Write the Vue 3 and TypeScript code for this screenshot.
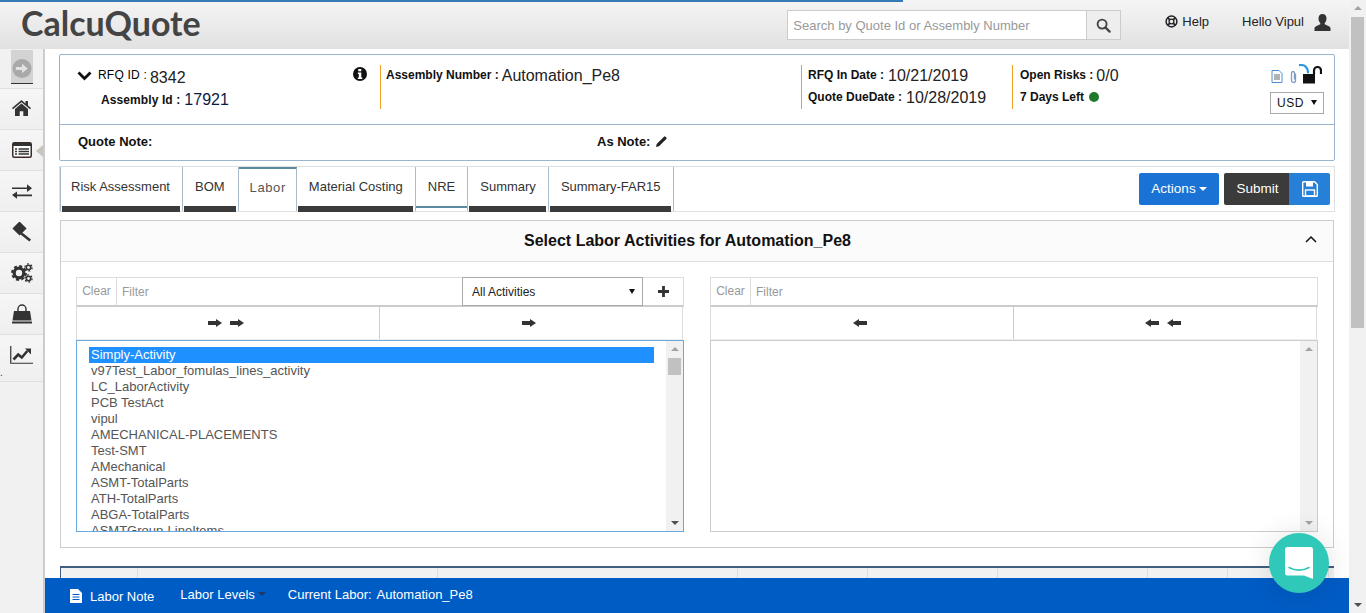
<template>
  <div class="page">
    <div class="window">
      <header class="topbar">
        <div class="progress"></div>
        <div class="logo">CalcuQuote</div>
        <div class="search">
          <input type="text" placeholder="Search by Quote Id or Assembly Number" />
          <span class="search-btn">
            <svg width="15" height="15" viewBox="0 0 16 16"><circle cx="6.500" cy="6.500" r="4.800" fill="none" stroke="#444" stroke-width="2" /><path d="M10 10l4.500 4.500" stroke="#444" stroke-width="2.400" stroke-linecap="round" /></svg>
          </span>
        </div>
        <div class="help">
          <svg width="13" height="13" viewBox="0 0 14 14"><circle cx="7" cy="7" r="5.800" fill="none" stroke="#222" stroke-width="1.600" /><circle cx="7" cy="7" r="2.600" fill="none" stroke="#222" stroke-width="1.400" /><path d="M3 3l2 2M11 3L9 5M3 11l2-2M11 11L9 9" stroke="#222" stroke-width="1.800" /></svg>
          Help
        </div>
        <div class="hello">Hello Vipul</div>
        <svg class="user" width="17" height="17" viewBox="0 0 16 17"><path d="M8 0c2.600 0 4 2 4 4.400 0 2-.9 3.600-1.800 4.500v1.400l4.200 2c1 .5 1.600 1.200 1.600 2.200V17H0v-2.500c0-1 .6-1.700 1.600-2.200l4.200-2V8.900C4.900 8 4 6.400 4 4.400 4 2 5.400 0 8 0z" fill="#333" /></svg>
      </header>

      <div class="body">
        <aside class="sidebar">
          <div class="side-toggle">
            <svg width="22" height="22" viewBox="0 0 22 22"><circle cx="11" cy="11" r="10" fill="#a9a9a9" /><path d="M4.500 9.500h6.500V6l6 5-6 5v-3.500H4.500z" fill="#e2e2e2" /></svg>
          </div>
          <div class="side-item home">
            <svg width="19" height="16" viewBox="0 0 19 16"><path d="M9.500 0L0 8l1 1.200L9.500 2.200 18 9.200 19 8l-3-2.500V1h-2.500v2.400z" fill="#333" /><path d="M9.500 3.600L3 9v7h4.700v-4.800h3.600V16H16V9z" fill="#333" /></svg>
          </div>
          <div class="side-item active-item">
            <svg width="20" height="16" viewBox="0 0 20 16"><rect x=".75" y=".75" width="18.500" height="14.500" rx="1.500" fill="#fff" stroke="#3a2a28" stroke-width="1.500" /><rect x="1" y="1" width="18" height="3" fill="#333" /><path d="M3 7h2M3 9.500h2M3 12h2M6.500 7H17M6.500 9.500H17M6.500 12H17" stroke="#333" stroke-width="1.400" /></svg>
            <span class="caret-left"></span>
          </div>
          <div class="side-item">
            <svg width="20" height="15" viewBox="0 0 20 15"><path d="M0 3.400h15V.3L20 4.200l-5 3.900V5H0z" fill="#333" /><path d="M20 10.600H5V7.500L0 11l5 3.700v-2.500h15z" fill="#333" /></svg>
          </div>
          <div class="side-item">
            <svg width="20" height="20" viewBox="0 0 20 20"><rect x="2.500" y="1.500" width="10" height="10" transform="rotate(45 7.500 6.500)" fill="#333" /><path d="M9.500 10l9.500 7.500-1.600 2L8 12z" fill="#333" /></svg>
          </div>
          <div class="side-item">
            <svg width="22" height="20" viewBox="0 0 22 20"><circle cx="8" cy="10" r="4.800" fill="none" stroke="#333" stroke-width="3.200" /><circle cx="8" cy="10" r="6.900" fill="none" stroke="#333" stroke-width="2" stroke-dasharray="3 2.420" /><circle cx="17.500" cy="4.500" r="2.200" fill="none" stroke="#333" stroke-width="1.600" /><circle cx="17.500" cy="4.500" r="3.600" fill="none" stroke="#333" stroke-width="1.300" stroke-dasharray="1.800 1.970" /><circle cx="17.500" cy="15.500" r="2.200" fill="none" stroke="#333" stroke-width="1.600" /><circle cx="17.500" cy="15.500" r="3.600" fill="none" stroke="#333" stroke-width="1.300" stroke-dasharray="1.800 1.970" /></svg>
          </div>
          <div class="side-item">
            <svg width="20" height="20" viewBox="0 0 20 20"><path d="M6 7V5a4 4 0 0 1 8 0v2" fill="none" stroke="#333" stroke-width="1.400" /><path d="M2 7h16l1.500 9.500H.5z" fill="#333" /><rect x="0" y="17.500" width="20" height="2" fill="#333" /></svg>
          </div>
          <div class="side-item last">
            <svg width="23" height="18" viewBox="0 0 23 18"><path d="M.75 0v17.250H23" fill="none" stroke="#333" stroke-width="1.200" /><path d="M3.500 13.500l4.700-5 3.600 3 5.500-6.500" fill="none" stroke="#333" stroke-width="2.600" /><path d="M15 2.500h6v6z" fill="#333" /></svg>
            <span class="side-dot">.</span>
          </div>
        </aside>

        <main class="main">
          <section class="info-card">
            <div class="info-top">
              <div class="info-ids">
                <div class="id-line first">
                  <svg class="chevron" width="15" height="10" viewBox="0 0 15 10"><path d="M1.500 1.500l6 6 6-6" fill="none" stroke="#111" stroke-width="2.800" /></svg>
                  <b class="thin">RFQ ID :</b><span class="val">8342</span>
                </div>
                <div class="id-line second"><b>Assembly Id :</b><span class="val navy">17921</span></div>
                <svg class="info-icon" width="14" height="14" viewBox="0 0 14 14"><circle cx="7" cy="7" r="7" fill="#111" /><rect x="5.300" y="2" width="3" height="2.300" fill="#fff" /><path d="M4.800 5.500h3.500v5h1v1.500H4.800v-1.500h1V7h-1z" fill="#fff" /></svg>
              </div>
              <div class="info-col assembly">
                <div class="row"><b>Assembly Number :</b><span class="val">Automation_Pe8</span></div>
              </div>
              <div class="info-col dates">
                <div class="row"><b>RFQ In Date :</b><span class="val">10/21/2019</span></div>
                <div class="row"><b>Quote DueDate :</b><span class="val">10/28/2019</span></div>
              </div>
              <div class="info-col risks">
                <div class="row"><b>Open Risks :</b><span class="val">0/0</span></div>
                <div class="row"><b>7 Days Left</b><i class="dot"></i></div>
              </div>
              <div class="info-tools">
                <div class="tool-icons">
                  <svg class="doc" width="12" height="13" viewBox="0 0 12 13"><path d="M1 .5h7l3 3v9H1z" fill="#fff" stroke="#4a90d0" /><path d="M3 5h6M3 7h6M3 9h6" stroke="#666" /></svg>
                  <svg class="clip" width="9" height="14" viewBox="0 0 9 14"><path d="M6.500 3.500v7a2 2 0 0 1-4 0V3a1.500 1.500 0 0 1 3 0v6.500" fill="none" stroke="#7f9cc0" stroke-width="1.300" /></svg>
                  <svg class="lock" width="24" height="20" viewBox="0 0 24 20"><path d="M1 1.200c5-.9 9 1.300 9 8" fill="none" stroke="#2f9ae0" stroke-width="2.200" /><path d="M16 10V6.500a3.500 3.500 0 0 1 7 0V10" fill="none" stroke="#111" stroke-width="2.200" /><rect x="5" y="10" width="12" height="9.500" fill="#111" /></svg>
                </div>
                <div class="currency">USD<span class="tri"></span></div>
              </div>
            </div>
            <div class="info-notes">
              <b class="quote-note">Quote Note:</b>
              <b class="as-note">As Note:</b>
              <svg width="11" height="11" viewBox="0 0 11 11"><path d="M0 11l.7-3L8 .7a1 1 0 0 1 1.400 0l.9.9a1 1 0 0 1 0 1.400L3 10.300z" fill="#222" /></svg>
            </div>
          </section>

          <nav class="tabs">
            <a v-for="tab in tabs" :key="tab.name" class="tab" :class="tab.state">{{ tab.name }}</a>
            <div class="tab-actions">
              <button class="btn-actions">Actions<span class="caret"></span></button>
              <div class="submit-group">
                <button class="btn-submit">Submit</button>
                <button class="btn-save">
                  <svg width="16" height="16" viewBox="0 0 16 16"><path d="M1.500.7h11l2.800 2.800v11a.8.8 0 0 1-.8.8h-13a.8.8 0 0 1-.8-.8v-13a.8.8 0 0 1 .8-.8z" fill="none" stroke="#fff" stroke-width="1.400" /><rect x="4" y="1" width="7" height="4.500" fill="#fff" /><rect x="3.500" y="9" width="9" height="6" fill="none" stroke="#fff" stroke-width="1.400" /></svg>
                </button>
              </div>
            </div>
          </nav>

          <section class="panel">
            <div class="panel-head">
              <h3>Select Labor Activities for Automation_Pe8</h3>
              <svg class="collapse" width="12" height="8" viewBox="0 0 12 8"><path d="M1 7l5-5 5 5" fill="none" stroke="#111" stroke-width="1.500" /></svg>
            </div>
            <div class="dual">
              <div class="side">
                <div class="filter-row">
                  <span class="clear">Clear</span>
                  <input class="filter" placeholder="Filter" />
                  <div class="activity-select">All Activities<span class="tri"></span></div>
                  <span class="plus">
                    <svg width="11" height="11" viewBox="0 0 11 11"><path d="M5.500 0v11M0 5.500h11" stroke="#333" stroke-width="2.800" /></svg>
                  </span>
                </div>
                <div class="move-row">
                  <button><span v-for="n in 2" :key="n" class="arrow right"></span></button>
                  <button><span class="arrow right"></span></button>
                </div>
                <div class="listbox focused">
                  <ul>
                    <li v-for="(item, i) in activities" :key="item" :class="{ selected: i === 0 }">{{ item }}</li>
                  </ul>
                  <div class="list-scroll">
                    <span class="sc-up"></span>
                    <span class="sc-thumb"></span>
                    <span class="sc-down"></span>
                  </div>
                </div>
              </div>
              <div class="side">
                <div class="filter-row">
                  <span class="clear">Clear</span>
                  <input class="filter" placeholder="Filter" />
                </div>
                <div class="move-row">
                  <button><span class="arrow left"></span></button>
                  <button><span v-for="n in 2" :key="n" class="arrow left"></span></button>
                </div>
                <div class="listbox">
                  <ul></ul>
                  <div class="list-scroll">
                    <span class="sc-up"></span>
                    <span class="sc-down"></span>
                  </div>
                </div>
              </div>
            </div>
          </section>

          <div class="grid-head">
            <span v-for="(w, i) in gridCols" :key="i" class="grid-col" :style="{ width: w + 'px' }"></span>
          </div>

          <footer class="bottom-bar">
            <svg width="12" height="14" viewBox="0 0 12 14"><path d="M0 0h8l4 4v10H0z" fill="#fff" /><path d="M2.500 5.500h7M2.500 8h7M2.500 10.500h7" stroke="#005cc5" /></svg>
            <span class="note">Labor Note</span>
            <span class="levels">Labor Levels<i class="dark-caret"></i></span>
            <span class="current-label">Current Labor:</span>
            <span class="current-name">Automation_Pe8</span>
          </footer>
        </main>
      </div>
    </div>

    <div class="page-scroll">
      <span class="ps-up"></span>
      <span class="ps-thumb"></span>
      <span class="ps-down"></span>
    </div>

    <div class="chat">
      <svg width="28" height="32" viewBox="0 0 28 32"><path d="M2.500 0h23A2.500 2.500 0 0 1 28 2.500V32l-9-3.500H2.500A2.500 2.500 0 0 1 0 26V2.500A2.500 2.500 0 0 1 2.500 0z" fill="#fff" /><path d="M4 20.500c6 3.500 14 3.500 20 0" fill="none" stroke="#30c8b8" stroke-width="1.600" stroke-linecap="round" /></svg>
    </div>
  </div>
</template>

<script setup lang="ts">
interface Tab {
  name: string;
  state: string;
}

const tabs: Tab[] = [
  { name: 'Risk Assessment', state: 'done' },
  { name: 'BOM', state: 'done' },
  { name: 'Labor', state: 'active' },
  { name: 'Material Costing', state: 'done' },
  { name: 'NRE', state: 'partial' },
  { name: 'Summary', state: 'done' },
  { name: 'Summary-FAR15', state: 'done' },
];

const activities: string[] = [
  'Simply-Activity',
  'v97Test_Labor_fomulas_lines_activity',
  'LC_LaborActivity',
  'PCB TestAct',
  'vipul',
  'AMECHANICAL-PLACEMENTS',
  'Test-SMT',
  'AMechanical',
  'ASMT-TotalParts',
  'ATH-TotalParts',
  'ABGA-TotalParts',
  'ASMTGroup-LineItems',
];

const gridCols: number[] = [77, 300, 300, 130, 130, 150, 80, 101];
</script>

<style>
html,
body {
  margin: 0;
  overflow: hidden;
}
</style>

<style scoped>
.page {
  display: flex;
  width: 1366px;
  height: 613px;
  overflow: hidden;
  position: relative;
  font-family: "Liberation Sans", Arial, sans-serif;
  color: #333;
  background: #fff;
}

.window {
  flex: 1;
  min-width: 0;
  display: flex;
  flex-direction: column;
}

.topbar {
  position: relative;
  height: 49px;
  flex: none;
  display: flex;
  align-items: center;
  background: linear-gradient(#f5f5f5, #e1e1e1);
}

.progress {
  position: absolute;
  left: 0;
  top: 0;
  width: 903px;
  height: 2px;
  background: #337ab7;
}

.logo {
  margin-left: 21px;
  margin-top: -4px;
  font-family: Lato, sans-serif;
  font-weight: 700;
  font-size: 34px;
  color: #444;
}

.search {
  margin-left: auto;
  display: flex;
  width: 334px;
  height: 30px;
  box-sizing: border-box;
  border: 1px solid #ccc;
  background: #fff;
  margin-top: 1px;
}

.search input {
  flex: 1;
  min-width: 0;
  border: 0;
  outline: 0;
  padding: 0 5px;
  font: 13px "Liberation Sans", Arial, sans-serif;
}

.search input::placeholder,
.filter::placeholder {
  color: #999;
  opacity: 1;
}

.search-btn {
  width: 33px;
  display: flex;
  align-items: center;
  justify-content: center;
  background: #eee;
  border-left: 1px solid #ccc;
}

.help {
  margin-left: 44px;
  display: flex;
  align-items: center;
  gap: 4px;
  font-size: 13px;
  color: #222;
  margin-top: -6px;
}

.hello {
  margin-left: 33px;
  font-size: 13px;
  color: #222;
  margin-top: -6px;
}

.user {
  margin-left: 10px;
  margin-right: 18px;
  margin-top: -5px;
}

.body {
  flex: 1;
  display: flex;
  min-height: 0;
}

.sidebar {
  width: 43px;
  flex: none;
  background: #f1f1f1;
  border-right: 2px solid #ccc;
}

.side-toggle {
  height: 39px;
  display: flex;
  justify-content: center;
}

.side-toggle svg {
  box-sizing: content-box;
  padding: 8px 0 4px;
  background: #d3d3d3;
  border-bottom: 1px solid #333;
  height: 21px;
  align-self: flex-start;
  margin-top: 1px;
  width: 22px;
}

.side-item {
  position: relative;
  height: 40px;
  border-top: 1px solid #e0e0e0;
  display: flex;
  align-items: center;
  justify-content: center;
  background: linear-gradient(#f6f6f6, #efefef);
}

.side-item.home svg {
  margin-top: -2px;
}

.side-item.last {
  border-bottom: 1px solid #e0e0e0;
  align-items: flex-start;
  padding-top: 11px;
  height: 35px;
}

.caret-left {
  position: absolute;
  right: 0;
  top: 15px;
  border: 6px solid transparent;
  border-left: 0;
  border-right: 7px solid #c9c4bd;
}

.side-dot {
  position: absolute;
  left: 0;
  bottom: 3px;
  font-size: 10px;
}

.main {
  flex: 1;
  min-width: 0;
  position: relative;
  padding: 5px 14px 0;
  box-sizing: border-box;
  background: #fff;
}

b {
  font-size: 12px;
  line-height: 14px;
  color: #111;
  margin-top: 2px;
  white-space: nowrap;
}

.val {
  font-size: 16px;
  line-height: 18px;
  color: #222;
  margin-left: 3px;
  margin-top: 1px;
  white-space: nowrap;
}

.val.navy {
  color: #0a1a4a;
}

.info-card {
  border: 1px solid #9db5cc;
  border-radius: 2px;
  height: 107px;
  box-sizing: border-box;
}

.info-top {
  height: 69px;
  display: flex;
  border-bottom: 1px solid #9db5cc;
}

.info-ids {
  position: relative;
  width: 320px;
  flex: none;
  padding: 12px 0 0 17px;
  box-sizing: border-box;
}

.id-line {
  display: flex;
  align-items: flex-start;
}

.id-line.first {
  height: 24px;
}

.id-line.first b {
  margin-top: 1px;
}

.id-line.first .val {
  margin-top: 2px;
  margin-left: 3px;
}

.id-line.second {
  padding-left: 24px;
  height: 22px;
}

.id-line.second b {
  margin-top: 2px;
  letter-spacing: 0.1px;
}

.id-line.second .val {
  margin-top: 0;
  margin-left: 4px;
}

.thin {
  font-weight: 400;
  letter-spacing: 0.2px;
  color: #000;
}

.chevron {
  margin-right: 6px;
  margin-top: 4px;
}

.info-icon {
  position: absolute;
  right: 13px;
  top: 12px;
}

.info-col {
  margin-top: 10px;
  height: 44px;
  box-sizing: border-box;
  border-left: 1px solid #f0a020;
  padding: 1px 0 0 5px;
  flex: none;
}

.assembly {
  width: 421px;
}

.dates {
  width: 211px;
  padding-left: 6px;
}

.dates .val {
  margin-left: 4px;
}

.risks {
  width: 220px;
  padding-left: 7px;
}

.row {
  height: 22px;
  display: flex;
  align-items: flex-start;
}

.dot {
  width: 10px;
  height: 10px;
  border-radius: 50%;
  background: #1e7b2b;
  margin-left: 5px;
  margin-top: 4px;
}

.info-tools {
  flex: 1;
  display: flex;
  flex-direction: column;
  align-items: flex-end;
  padding-right: 10px;
}

.tool-icons {
  display: flex;
  align-items: flex-end;
  height: 29px;
  box-sizing: border-box;
  padding: 8px 2px 0 0;
  margin-bottom: 8px;
}

.doc {
  margin-right: 6px;
  margin-bottom: 1px;
}

.currency {
  position: relative;
  width: 54px;
  height: 22px;
  box-sizing: border-box;
  border: 1px solid #aaa;
  background: #fff;
  font-size: 12px;
  letter-spacing: 0.5px;
  line-height: 20px;
  padding-left: 6px;
  color: #111;
}

.tri {
  position: absolute;
  right: 6px;
  top: 7px;
  border: 3px solid transparent;
  border-top: 5px solid #111;
  border-bottom: 0;
}

.info-notes {
  height: 36px;
  display: flex;
  align-items: center;
  padding: 0 0 3px 18px;
  box-sizing: border-box;
}

.info-notes b {
  font-size: 13px;
  margin-top: 0;
}

.quote-note {
  width: 491px;
}

.as-note {
  width: 59px;
  margin-left: 28px;
}

.tabs {
  margin-top: 5px;
  height: 46px;
  box-sizing: border-box;
  border: 1px solid #e0e0e0;
  display: flex;
  align-items: stretch;
}

.tab {
  position: relative;
  font-size: 13px;
  line-height: 39px;
  padding: 0 12px;
  color: #333;
  border-right: 1px solid #a9bccb;
  white-space: nowrap;
}

.tab:first-child {
  border-left: 1px solid #a9bccb;
  padding-left: 10px;
}

.tab:nth-child(2) {
  padding-right: 13px;
}

.tab.done::after {
  content: "";
  position: absolute;
  left: 1px;
  right: 2px;
  bottom: -1px;
  height: 6px;
  background: #3b3b3b;
}

.tab.active {
  border-top: 2px solid #5b8ba0;
  color: #555;
  line-height: 37px;
  letter-spacing: 0.6px;
  padding: 0 10px 0 11px;
}

.tab.partial::after {
  content: "";
  position: absolute;
  left: 0;
  right: 0;
  bottom: 3px;
  height: 2px;
  background: #5b8ba0;
}

.tab-actions {
  margin-left: auto;
  display: flex;
  gap: 5px;
  padding: 6px 4px 0 0;
}

button {
  font-family: inherit;
  cursor: pointer;
}

.btn-actions {
  width: 80px;
  height: 32px;
  border: 0;
  border-radius: 2px;
  background: #1b72d5;
  color: #fff;
  font-size: 13.500px;
  padding: 0 0 2px;
}

.caret {
  display: inline-block;
  margin-left: 3px;
  vertical-align: middle;
  border: 4px solid transparent;
  border-top: 4px solid #fff;
  border-bottom: 0;
}

.submit-group {
  display: flex;
  height: 32px;
  border-radius: 2px;
  overflow: hidden;
}

.btn-submit {
  width: 65px;
  border: 0;
  background: #3b3b3b;
  color: #fff;
  font-size: 13.500px;
  padding: 0 0 2px 2px;
}

.btn-save {
  width: 41px;
  border: 0;
  background: #2680d8;
  padding: 0;
  display: flex;
  align-items: center;
  justify-content: center;
}

.panel {
  margin-top: 8px;
  margin-left: 1px;
  margin-right: 1px;
  height: 328px;
  box-sizing: border-box;
  border: 1px solid #ccc;
}

.panel-head {
  position: relative;
  height: 41px;
  box-sizing: border-box;
  border-bottom: 1px solid #ddd;
  background: #fbfbfb;
  display: flex;
  align-items: center;
  justify-content: center;
  padding-right: 19px;
}

h3 {
  margin: 0;
  font-size: 16px;
  color: #111;
}

.collapse {
  position: absolute;
  right: 16px;
  top: 14px;
}

.dual {
  display: flex;
  gap: 26px;
  padding: 15px 15px 0;
}

.side {
  width: 608px;
}

.filter-row {
  display: flex;
  height: 30px;
  box-sizing: border-box;
  border: 1px solid #ddd;
  border-bottom: 2px solid #ccc;
}

.clear {
  width: 40px;
  flex: none;
  box-sizing: border-box;
  border-right: 1px solid #ddd;
  font-size: 12px;
  line-height: 27px;
  text-align: center;
  color: #999;
}

.filter {
  flex: 1;
  min-width: 0;
  border: 0;
  outline: 0;
  padding: 0 5px;
  font: 12px "Liberation Sans", Arial, sans-serif;
}

.activity-select {
  position: relative;
  width: 181px;
  flex: none;
  box-sizing: border-box;
  height: 29px;
  margin: -1px 0 0;
  border: 1px solid #aaa;
  font-size: 12px;
  line-height: 28px;
  padding-left: 9px;
  color: #222;
}

.activity-select .tri {
  top: 11px;
  right: 7px;
}

.plus {
  width: 40px;
  flex: none;
  display: flex;
  align-items: center;
  justify-content: center;
}

.move-row {
  display: flex;
  height: 33px;
  box-sizing: border-box;
  margin-right: 1px;
  border: 1px solid #ddd;
  border-width: 0 1px 1px;
  border-bottom-color: #eee;
}

.move-row button {
  flex: 1;
  border: 0;
  background: #fff;
  padding: 0 4px 0 0;
  display: flex;
  align-items: center;
  justify-content: center;
  gap: 8px;
}

.move-row button + button {
  border-left: 1px solid #ccc;
}

.arrow {
  position: relative;
  width: 14px;
  height: 9px;
}

.arrow::before {
  content: "";
  position: absolute;
  top: 2.500px;
  height: 4px;
  width: 9px;
  background: #333;
}

.arrow::after {
  content: "";
  position: absolute;
  top: 0;
  border: 4.500px solid transparent;
}

.arrow.right::before {
  left: 0;
}

.arrow.right::after {
  right: 0;
  border-left: 6px solid #333;
  border-right: 0;
}

.arrow.left::before {
  right: 0;
}

.arrow.left::after {
  left: 0;
  border-right: 6px solid #333;
  border-left: 0;
}

.listbox {
  position: relative;
  height: 192px;
  box-sizing: border-box;
  border: 1px solid #ccc;
  overflow: hidden;
  display: flex;
}

.listbox.focused {
  border-color: #6aa9e0;
}

ul {
  flex: 1;
  min-width: 0;
  list-style: none;
  margin: 0;
  padding: 6px 12px 0;
}

li {
  font-size: 13px;
  line-height: 16px;
  padding-left: 2px;
  color: #555;
  white-space: nowrap;
}

li.selected {
  background: #1e90ff;
  color: #fff;
}

.list-scroll {
  position: relative;
  width: 17px;
  flex: none;
  background: #f1f1f1;
}

.sc-up,
.sc-down,
.ps-up,
.ps-down {
  position: absolute;
  left: 50%;
  margin-left: -4px;
  border: 4px solid transparent;
}

.sc-up {
  top: 6px;
  border-top: 0;
  border-bottom: 4px solid #a3a3a3;
}

.sc-down {
  bottom: 6px;
  border-bottom: 0;
  border-top: 4px solid #505050;
}

.listbox:not(.focused) .sc-down {
  border-top-color: #a3a3a3;
}

.sc-thumb {
  position: absolute;
  left: 2px;
  right: 2px;
  top: 17px;
  height: 17px;
  background: #c1c1c1;
}

.grid-head {
  margin: 18px 1px 0;
  height: 30px;
  box-sizing: border-box;
  border-top: 2px solid #3f5f80;
  border-left: 1px solid #3f5f80;
  background: #f1f1f1;
  display: flex;
}

.grid-col {
  flex: none;
  box-sizing: border-box;
  border-right: 1px solid #ddd;
}

.bottom-bar {
  position: absolute;
  left: 0;
  right: 0;
  bottom: 0;
  height: 35px;
  background: #005cc5;
  color: #fff;
  display: flex;
  align-items: center;
  padding-left: 25px;
  font-size: 13px;
}

.note {
  margin-left: 8px;
  margin-top: 1px;
}

.levels {
  margin-left: 26px;
  display: flex;
  align-items: center;
  margin-top: -3px;
}

.dark-caret {
  margin-left: 3px;
  border: 4px solid transparent;
  border-top: 4px solid #1f3a66;
  border-bottom: 0;
}

.current-label {
  margin-left: 22px;
  margin-top: -3px;
}

.current-name {
  margin-left: 5px;
  margin-top: -3px;
}

.page-scroll {
  position: relative;
  width: 17px;
  flex: none;
  background: #f1f1f1;
}

.ps-up {
  top: 6px;
  border-top: 0;
  border-bottom: 4px solid #a3a3a3;
}

.ps-down {
  bottom: 6px;
  border-bottom: 0;
  border-top: 4px solid #505050;
}

.ps-thumb {
  position: absolute;
  left: 2px;
  right: 2px;
  top: 17px;
  height: 311px;
  background: #c1c1c1;
}

.chat {
  position: absolute;
  left: 1269px;
  top: 533px;
  width: 60px;
  height: 60px;
  border-radius: 50%;
  background: #30c8b8;
  box-shadow: 0 1px 30px rgba(0, 0, 0, 0.12);
  display: flex;
  align-items: center;
  justify-content: center;
}
</style>
